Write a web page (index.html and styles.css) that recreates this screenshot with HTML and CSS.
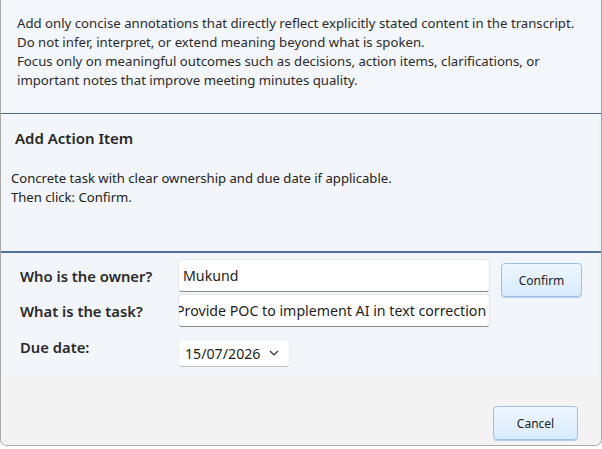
FILE: index.html
```html
<!DOCTYPE html>
<html>
<head>
<meta charset="utf-8">
<link rel="stylesheet" href="styles.css">
</head>
<body>
<div class="window">
  <div class="intro">
    <p>Add only concise annotations that directly reflect explicitly stated content in the transcript.</p>
    <p>Do not infer, interpret, or extend meaning beyond what is spoken.</p>
    <p>Focus only on meaningful outcomes such as decisions, action items, clarifications, or</p>
    <p>important notes that improve meeting minutes quality.</p>
  </div>
  <div class="rule-thin"></div>
  <div class="action">
    <h2 class="title">Add Action Item</h2>
    <p>Concrete task with clear ownership and due date if applicable.</p>
    <p>Then click: Confirm.</p>
  </div>
  <div class="rule-thick"></div>
  <div class="form">
    <div class="fields">
      <div class="row row-owner">
        <span class="label">Who is the owner?</span>
        <div class="input"><span class="value">Mukund</span></div>
      </div>
      <div class="row row-task">
        <span class="label">What is the task?</span>
        <div class="input"><span class="value scrolled">Provide POC to implement AI in text correction</span></div>
      </div>
      <div class="row row-date">
        <span class="label label-date">Due date:</span>
        <div class="date">
          <span class="value">15/07/2026</span>
          <svg class="chev" width="10" height="6" viewBox="0 0 10 6"><path d="M1 1 L5 5 L9 1" fill="none" stroke="#333" stroke-width="1.2"/></svg>
        </div>
      </div>
    </div>
    <button class="btn btn-confirm">Confirm</button>
  </div>
  <div class="footer">
    <button class="btn btn-cancel">Cancel</button>
  </div>
</div>
</body>
</html>
```
FILE: styles.css
```css
* { box-sizing: border-box; }
html, body { margin: 0; padding: 0; background: #ffffff; }
body { width: 602px; height: 449px; overflow: hidden; font-family: "Noto Sans", "Open Sans", sans-serif; color: #222; }
p { margin: 0; }

.window {
  width: 602px;
  height: 446px;
  border-left: 1px solid #a8a8a8;
  border-right: 1px solid #a8a8a8;
  border-bottom: 1px solid #a8a8a8;
  border-radius: 0 0 7px 7px;
  overflow: hidden;
  display: flex;
  flex-direction: column;
  background: #f3f3f3;
}

.intro {
  height: 113px;
  padding: 14px 16px 0 16px;
  background: #f3f6fb;
  font-size: 13.2px;
  line-height: 19px;
  color: #2b2b2b;
}

.rule-thin { height: 1px; background: #4d6b8e; flex: none; }

.action {
  height: 137px;
  padding: 14px 10px 0 10px;
  background: #f2f5fa;
  font-size: 13.1px;
  line-height: 19px;
  color: #222;
  margin-right: 4px;
}
.action p { line-height: 19px; }
.title {
  margin: 0 0 21px 4px;
  font-size: 15px;
  font-weight: 600;
  line-height: 20px;
  color: #262626;
}

.rule-thick { height: 2px; background: #4f7299; flex: none; }

.form {
  height: 124px;
  background: #f2f5fa;
  margin-right: 4px;
  display: flex;
  align-items: flex-start;
  padding: 6px 0 0 19px;
}
.fields { display: flex; flex-direction: column; }
.row { display: flex; align-items: center; }
.label {
  width: 158px;
  font-size: 14.8px;
  font-weight: 600;
  color: #2a2a2a;
}
.input {
  width: 312px;
  height: 33px;
  background: #fff;
  border: 1px solid #e4e6ea;
  border-bottom: 1px solid #8a8a8a;
  border-radius: 4px;
  overflow: hidden;
  white-space: nowrap;
  display: flex;
  align-items: center;
  padding-left: 4px;
  font-size: 14.2px;
  color: #1e1e1e;
}
.row-task { margin-top: 2px; }
.scrolled { margin-left: -7px; }
.row-date { margin-top: 12px; align-items: flex-start; }
.label-date { line-height: 16px; }
.date {
  width: 112px;
  height: 28px;
  background: #fff;
  border: 1px solid #eceef1;
  border-bottom: 1px solid #bdbdbd;
  border-radius: 4px;
  display: flex;
  align-items: center;
  padding-left: 6px;
  font-size: 14.2px;
  color: #1e1e1e;
}
.chev { margin-left: 9px; }

.btn {
  font-family: "Noto Sans", "Open Sans", sans-serif;
  font-size: 12px;
  color: #222;
  background: linear-gradient(#eef6fe, #d7ebfd);
  border: 1px solid #9fc0e2;
  border-radius: 4px;
  box-shadow: 0 1px 0 #b5cde6;
  padding: 0;
}
.btn-confirm { width: 81px; height: 34px; margin: 4px 0 0 11px; }

.footer {
  flex: 1;
  background: #f3f3f3;
  display: flex;
  justify-content: flex-end;
  align-items: flex-start;
  padding: 29px 23px 0 0;
}
.btn-cancel { width: 85px; height: 34px; }
```
